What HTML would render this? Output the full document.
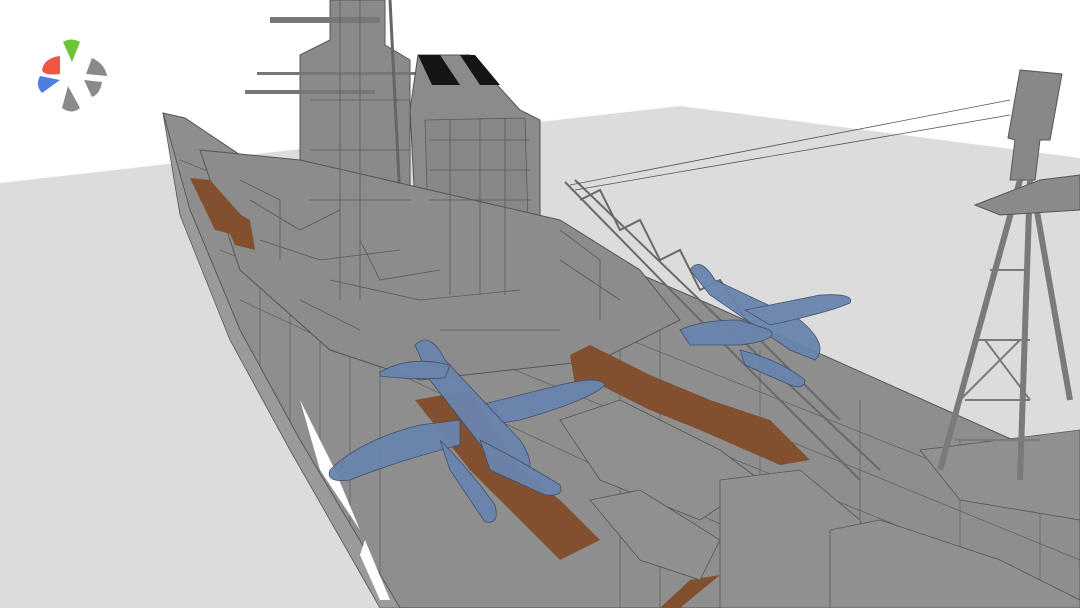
<!DOCTYPE html>
<html><head><meta charset="utf-8"><style>
html,body{margin:0;padding:0;width:1080px;height:608px;overflow:hidden;background:#fff}
svg{display:block}
</style></head><body>
<svg width="1080" height="608" viewBox="0 0 1080 608" xmlns="http://www.w3.org/2000/svg">
<defs>
<clipPath id="hc"><polygon points="163,113 185,118 300,195 560,240 700,300 1080,470 1080,608 400,608 300,440 240,330 190,210"/></clipPath>
</defs>
<rect width="1080" height="608" fill="#fff"/>
<polygon points="0,183 680,106 1080,158 1080,608 0,608" fill="#dcdcdc"/>
<!-- hull -->
<polygon points="163,113 185,118 300,195 560,240 700,300 1080,470 1080,608 400,608 300,440 240,330 190,210" fill="#8e8e8e" stroke="#555" stroke-width="1"/>
<g clip-path="url(#hc)" stroke="#5e5e5e" stroke-width="0.7" fill="none">
<path d="M200,200 L1080,560 M220,250 L1080,600 M240,300 L900,608 M180,160 L1080,520 M260,180 L260,608 M290,200 L290,608 M320,220 L320,608 M350,230 L350,608 M380,240 L380,608 M620,280 L620,608 M660,300 L660,608 M760,350 L760,608 M860,400 L860,608 M960,440 L960,608 M1040,470 L1040,608"/>
</g>
<polygon points="163,113 190,210 240,330 300,440 400,608 380,608 290,450 230,340 180,215" fill="#9a9a9a" stroke="#555" stroke-width="0.8"/>
<polygon points="300,400 335,470 360,530 320,470" fill="#fff"/>
<polygon points="365,540 390,600 380,600 360,555" fill="#fff"/>
<!-- bridge tower -->
<polygon points="300,55 330,40 330,0 385,0 385,45 410,60 410,300 300,300" fill="#8a8a8a" stroke="#555"/>
<rect x="245" y="90" width="130" height="4" fill="#777"/>
<rect x="270" y="17" width="110" height="6" fill="#777"/>
<rect x="257" y="72" width="170" height="3" fill="#777"/>
<line x1="390" y1="0" x2="400" y2="200" stroke="#666" stroke-width="3"/>
<!-- funnel -->
<polygon points="418,55 470,55 520,110 540,120 540,300 420,300 410,110" fill="#8b8b8b" stroke="#555"/>
<polygon points="418,55 440,55 460,85 432,85" fill="#151515"/>
<polygon points="460,55 475,55 500,85 480,85" fill="#151515"/>
<polygon points="425,120 525,118 530,290 430,295" fill="#878787" stroke="#5a5a5a" stroke-width="0.8"/>
<!-- superstructure -->
<polygon points="200,150 300,160 560,220 640,270 680,320 600,360 420,380 330,350 240,270" fill="#8c8c8c" stroke="#555"/>
<g stroke="#5a5a5a" stroke-width="0.8" fill="none">
<path d="M250,200 L300,230 L340,210 M260,240 L320,260 L400,250 M330,280 L420,300 L520,290 M440,330 L560,330 M560,260 L620,300 M300,300 L360,330 M240,180 L280,200 L280,260 M360,240 L380,280 L440,270 M560,230 L600,260 L600,320"/>
<path d="M430,140 L530,140 M430,170 L530,170 M430,200 L530,200 M450,120 L450,295 M480,118 L480,295 M505,118 L505,295"/>
<path d="M340,0 L340,300 M360,0 L360,300 M310,100 L410,100 M310,150 L410,150 M310,200 L410,200"/>
</g>
<!-- deck brown -->
<polygon points="190,178 210,180 250,225 235,235 215,230" fill="#82502f"/>
<polygon points="215,200 250,220 255,250 235,245" fill="#82502f"/>
<polygon points="570,355 590,345 620,360 650,375 710,400 770,420 810,460 780,465 700,430 650,410 600,385 575,385" fill="#82502f"/>
<polygon points="415,400 470,390 520,470 560,500 600,540 560,560 520,520 470,470" fill="#82502f"/>
<polygon points="690,580 720,575 680,608 660,608" fill="#82502f"/>
<!-- lower deck structures -->
<g stroke="#555" stroke-width="0.8" fill="#909090">
<polygon points="560,420 620,400 720,450 760,480 700,520 600,480"/>
<polygon points="590,500 640,490 720,540 700,580 640,560"/>
<polygon points="720,480 800,470 860,520 870,608 720,608"/>
<polygon points="830,530 880,520 1000,560 1080,600 1080,608 830,608"/>
<polygon points="920,450 1080,430 1080,520 960,500"/>
</g>
<!-- crane -->
<g stroke="#6a6a6a" stroke-width="2" fill="none">
<path d="M565,182 L700,320 L860,480 M575,180 L710,310 L880,470"/>
<path d="M580,200 L600,190 L620,230 L640,220 L660,260 L680,250 L700,290 L720,280 L760,340 L800,380 L840,420"/>
</g>
<line x1="570" y1="185" x2="1010" y2="100" stroke="#555" stroke-width="0.8"/>
<line x1="575" y1="190" x2="1010" y2="115" stroke="#555" stroke-width="0.8"/>
<!-- mast right -->
<polygon points="1020,70 1062,74 1050,140 1040,140 1035,180 1010,180 1015,140 1008,138" fill="#888" stroke="#555"/>
<g stroke="#7a7a7a" stroke-width="6" fill="none">
<path d="M1020,180 L940,470 M1030,180 L1020,480 M1035,200 L1070,400"/>
</g>
<g stroke="#7a7a7a" stroke-width="2" fill="none">
<path d="M975,340 L1030,340 M965,400 L1030,400 M955,440 L1040,440 M990,270 L1030,270 M960,400 L1020,340 M985,340 L1030,400"/>
</g>
<polygon points="975,205 1040,180 1080,175 1080,210 1000,215" fill="#8a8a8a" stroke="#555"/>
<!-- planes -->
<g fill="#6a84ad" stroke="#3d4d6a" stroke-width="0.8" opacity="0.95">
<path d="M330,470 Q360,440 420,425 L460,420 L460,445 Q400,460 350,480 Q325,483 330,470Z"/>
<path d="M480,405 L560,385 Q600,375 605,385 Q590,400 520,420 L490,425Z"/>
<path d="M415,345 Q430,330 445,360 L520,440 Q540,470 520,480 L500,470 L430,380 Z"/>
<path d="M380,372 Q410,355 450,365 L445,378 Q410,380 380,376Z"/>
<path d="M440,440 Q470,470 495,505 Q500,525 485,522 L450,470Z"/>
<path d="M480,440 Q520,460 560,485 Q565,497 545,495 L490,470Z"/>
<path d="M690,270 Q700,255 715,280 L800,320 Q830,345 815,360 L790,350 L710,295Z"/>
<path d="M745,310 L820,295 Q855,293 850,303 Q830,312 770,325Z"/>
<path d="M680,330 Q700,320 740,320 L770,330 Q780,340 740,345 L690,345Z"/>
<path d="M740,350 Q780,360 805,380 Q805,390 790,385 L745,365Z"/>
</g>
<!-- logo -->
<g>
<path d="M63,42 Q71,37 80,42 L72,62 Z" fill="#6bc63a"/>
<path d="M60,56 Q44,58 42,70 Q44,76 60,74 Z" fill="#ef5643"/>
<path d="M40,76 L60,80 L42,93 Q35,85 40,76 Z" fill="#4e7fe0"/>
<path d="M92,58 Q105,64 107,76 L86,74 Z" fill="#8a8a8a"/>
<path d="M84,80 L102,82 Q100,94 92,97 Z" fill="#8a8a8a"/>
<path d="M68,86 L80,108 Q72,115 62,108 Z" fill="#8a8a8a"/>
</g>
</svg>
</body></html>
